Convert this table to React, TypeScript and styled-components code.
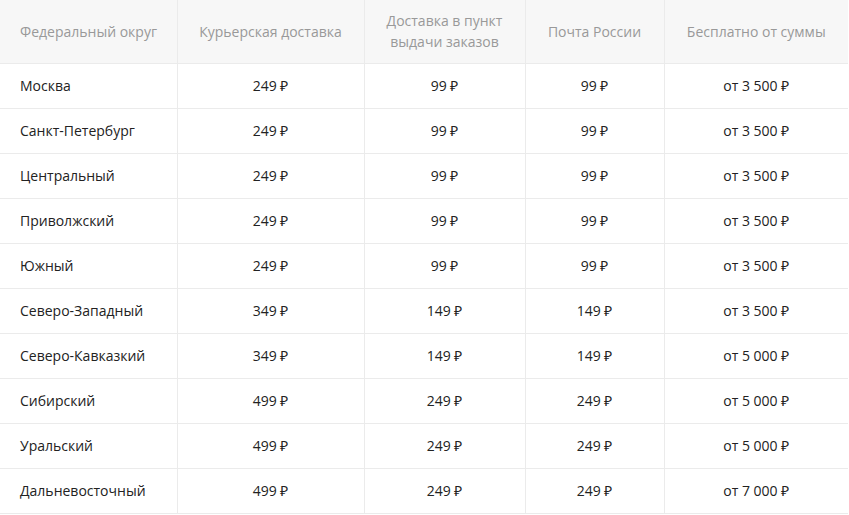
import React from "react";
import styled, { createGlobalStyle } from "styled-components";

const GlobalStyle = createGlobalStyle`
  body {
    margin: 0;
    background: #ffffff;
    font-family: "Open Sans", "Liberation Sans", sans-serif;
  }
`;

const rows = [
  ["Москва", "249 ₽", "99 ₽", "99 ₽", "от 3 500 ₽"],
  ["Санкт-Петербург", "249 ₽", "99 ₽", "99 ₽", "от 3 500 ₽"],
  ["Центральный", "249 ₽", "99 ₽", "99 ₽", "от 3 500 ₽"],
  ["Приволжский", "249 ₽", "99 ₽", "99 ₽", "от 3 500 ₽"],
  ["Южный", "249 ₽", "99 ₽", "99 ₽", "от 3 500 ₽"],
  ["Северо-Западный", "349 ₽", "149 ₽", "149 ₽", "от 3 500 ₽"],
  ["Северо-Кавказкий", "349 ₽", "149 ₽", "149 ₽", "от 5 000 ₽"],
  ["Сибирский", "499 ₽", "249 ₽", "249 ₽", "от 5 000 ₽"],
  ["Уральский", "499 ₽", "249 ₽", "249 ₽", "от 5 000 ₽"],
  ["Дальневосточный", "499 ₽", "249 ₽", "249 ₽", "от 7 000 ₽"],
];

const headers = [
  "Федеральный округ",
  "Курьерская доставка",
  "Доставка в пункт выдачи заказов",
  "Почта России",
  "Бесплатно от суммы",
];

const widths = [177, 187, 161, 139, 184];

const Table = styled.table`
  width: 848px;
  border-collapse: collapse;
  table-layout: fixed;
  font-size: 14px;
`;

const HeadCell = styled.th<{ $first?: boolean }>`
  height: 63px;
  padding: ${(p) => (p.$first ? "0 4px 0 20px" : "0 20px")};
  box-sizing: border-box;
  background: #f7f7f7;
  color: #999999;
  font-weight: 400;
  line-height: 21px;
  white-space: ${(p) => (p.$first ? "nowrap" : "normal")};
  text-align: ${(p) => (p.$first ? "left" : "center")};
  border: 1px solid #ebebeb;
  border-top: none;
  &:first-child {
    border-left: none;
  }
  &:last-child {
    border-right: none;
  }
`;

const Cell = styled.td<{ $first?: boolean }>`
  height: 45px;
  padding: 0 20px;
  box-sizing: border-box;
  color: #222222;
  line-height: 20px;
  text-align: ${(p) => (p.$first ? "left" : "center")};
  border: 1px solid #ebebeb;
  &:first-child {
    border-left: none;
  }
  &:last-child {
    border-right: none;
  }
`;

export default function App() {
  return (
    <>
      <GlobalStyle />
      <Table>
        <colgroup>
          {widths.map((w, i) => (
            <col key={i} style={{ width: w }} />
          ))}
        </colgroup>
        <thead>
          <tr>
            {headers.map((h, i) => (
              <HeadCell key={h} $first={i === 0}>
                {h}
              </HeadCell>
            ))}
          </tr>
        </thead>
        <tbody>
          {rows.map((r) => (
            <tr key={r[0]}>
              {r.map((c, i) => (
                <Cell key={i} $first={i === 0}>
                  {c}
                </Cell>
              ))}
            </tr>
          ))}
        </tbody>
      </Table>
    </>
  );
}
